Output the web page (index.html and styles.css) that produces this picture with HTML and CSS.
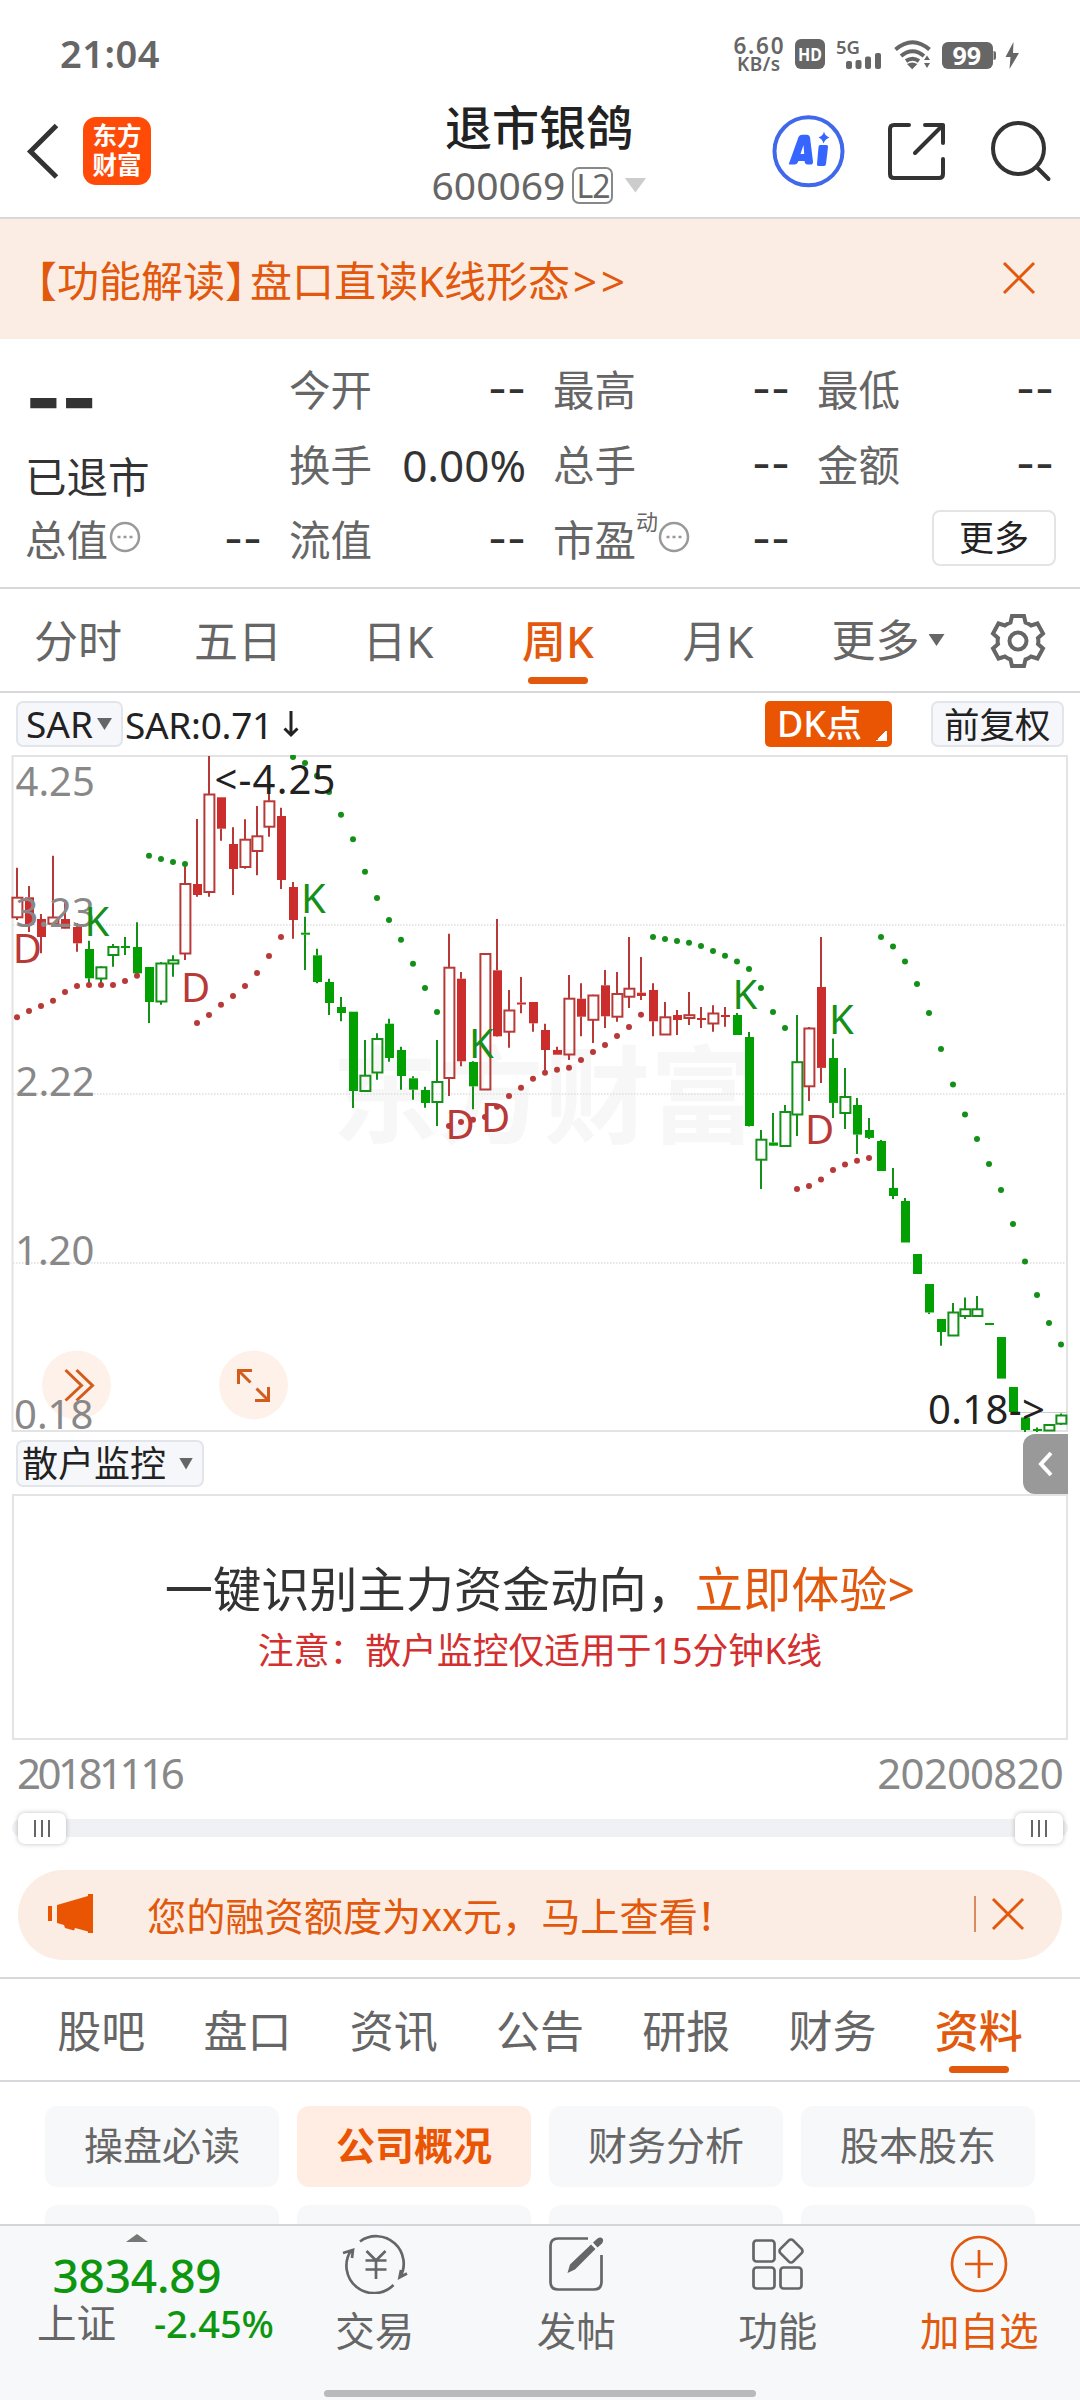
FILE: index.html
```html
<!DOCTYPE html>
<html lang="zh-CN">
<head>
<meta charset="utf-8">
<title>退市银鸽 600069</title>
<link rel="stylesheet" href="styles.css">
</head>
<body>
<div class="app">
  <div class="status">
    <span class="clock">21:04</span>
    <svg class="status-icons" viewBox="720 20 320 70" width="320" height="70">
      <g fill="#666" font-weight="600">
        <text x="733.5" y="53.5" font-size="22.5" textLength="50">6.60</text>
        <text x="737" y="71" font-size="19" textLength="43">KB/s</text>
        <rect x="795" y="39" width="30" height="30" rx="6"/>
        <text x="836" y="53.500" font-size="18.500" textLength="24" lengthAdjust="spacingAndGlyphs">5G</text>
        <rect x="846" y="61" width="6" height="8" rx="2"/><rect x="855.500" y="60" width="6" height="9" rx="2"/><rect x="865" y="56.500" width="6" height="12.500" rx="2"/><rect x="875" y="53" width="6" height="16" rx="2"/>
        <rect x="942" y="42" width="51" height="27" rx="6"/>
        <path d="M993.500 51q2.500 0 2.500 2v5q0 2-2.500 2zM1013.500 42l-8 15h5l-1 12 9.500-16h-6z"/>
        <path d="M907 64l5.200 5.200 5.200-5.200q-5.200-3-10.400 0zM924 60l3-4.500 3 4.500zM924 63l3 5 3-5z"/>
      </g>
      <path d="M895.500 49.500q17-14.500 34 0M901 56q11.500-9.500 23 0M906 61q6.500-4.500 13 0" fill="none" stroke="#666" stroke-width="4"/>
      <g fill="#fff" font-weight="700"><text x="798" y="61" font-size="18.500" textLength="24" lengthAdjust="spacingAndGlyphs">HD</text><text x="952.500" y="65" font-size="25">99</text></g>
    </svg>
  </div>

  <div class="header">
    <svg class="back" viewBox="0 0 40 60" width="40" height="60"><path d="M36.500 5.500L10.500 31.500 36.500 57" fill="none" stroke="#333" stroke-width="5"/></svg>
    <div class="logo"><span>东方</span><span>财富</span></div>
    <div class="title">
      <div class="name">退市银鸽</div>
      <div class="code">600069<span class="l2">L2</span><i class="tri tri-lg"></i></div>
    </div>
    <svg class="actions" viewBox="770 110 290 84" width="290" height="84">
      <circle cx="808.500" cy="151.300" r="34" fill="none" stroke="#3f68ea" stroke-width="4"/>
      <path d="M789 163.500L798.500 137q1-2.300 4-2.300h4.500q2.500 0 3 2.500l3 24.500q.2 2.800-2.500 2.800h-3q-2.500 0-3-3.500h-6q-1.500 3.500-4 3.500h-3.500q-3 0-2-1zM800.500 154h3.700l-.7-9zM820 145h6.500q1.700 0 1.500 2l-2 17q-.3 2-2 2h-5.500q-1.800 0-1.500-2l1.500-17q.3-2 1.500-2zM824 131.500q1 4.500 5.500 6-4.500 1.500-6 6-1-4.500-5-6 4.500-1.500 5.500-6z" fill="#3665ff"/>
      <g fill="none" stroke="#333" stroke-width="4" stroke-linecap="round" stroke-linejoin="round"><path d="M909 125h-15q-4 0-4 4v45q0 4 4 4h45q4 0 4-4v-15M925 125h18v18M943 125L915 153"/><circle cx="1018.500" cy="148.500" r="25.500"/><path d="M1036.500 167l12 12"/></g>
    </svg>
  </div>

  <div class="banner"><span><span class="tag">【功能解读】</span>盘口直读K线形态<span class="go">&gt;&gt;</span></span>
    <svg viewBox="0 0 34 34" width="34" height="34"><path d="M2 2l30 30M32 2L2 32"/></svg>
  </div>

  <div class="quote">
    <div class="price"><b>--</b><span>已退市</span></div>
    <div class="cell"><label>今开</label><em>--</em></div>
    <div class="cell"><label>最高</label><em>--</em></div>
    <div class="cell"><label>最低</label><em>--</em></div>
    <div class="cell"><label>换手</label><em class="num">0.00%</em></div>
    <div class="cell"><label>总手</label><em>--</em></div>
    <div class="cell"><label>金额</label><em>--</em></div>
    <div class="cell"><label>总值</label><svg class="info" viewBox="0 0 32 32" width="32" height="32"><circle cx="16" cy="16" r="14"/><path d="M8.500 16h3M14.500 16h3M20.500 16h3"/></svg><em>--</em></div>
    <div class="cell"><label>流值</label><em>--</em></div>
    <div class="cell"><label>市盈</label><sup>动</sup><svg class="info" viewBox="0 0 32 32" width="32" height="32"><circle cx="16" cy="16" r="14"/><path d="M8.500 16h3M14.500 16h3M20.500 16h3"/></svg><em>--</em></div>
    <div class="cell end"><button class="more">更多</button></div>
  </div>

  <div class="periods">
    <span>分时</span><span>五日</span><span>日K</span><span class="on">周K</span><span>月K</span>
    <span class="with-tri">更多<i class="tri tri-sm"></i></span>
    <svg viewBox="-30 -30 60 60" width="60" height="60"><path d="M-6-25H6L7.500-18.500Q10.500-17.500 13-15.500L19.500-17.500 25-7.500 20-3Q20.700 0 20 3L25 7.500 19.500 17.500 13 15.500Q10.500 17.500 7.500 18.500L6 25H-6L-7.500 18.500Q-10.500 17.500-13 15.500L-19.500 17.500-25 7.500-20 3Q-20.700 0-20-3L-25-7.500-19.500-17.500-13-15.500Q-10.500-17.500-7.500-18.500Z"/><circle r="8.500"/></svg>
  </div>

  <div class="indicator">
    <span class="box">SAR<i class="tri tri-md"></i></span><span class="sar">SAR:0.71</span><svg class="down" viewBox="0 0 16 28" width="16" height="28"><path d="M8 1v24M1.500 18.500L8 25l6.500-6.500"/></svg>
    <span class="dk">DK点</span><span class="box adj">前复权</span>
  </div>

  <svg id="chart" class="chart" viewBox="0 755 1080 678" width="1080" height="678">
    <text class="watermark" x="332" y="1135" textLength="424">东方财富</text>
    <path class="dotted" d="M13 925H1067M13 1094H1067M13 1263H1067"/>
    <path class="frame" d="M12.500 756H1067V1431H12.500Z"/>
    <path d="M1018 1412.500h49" stroke="#ccc"/>
    <g class="round"><circle cx="76.500" cy="1385" r="34.500"/><circle cx="253.500" cy="1385" r="34.500"/></g>
    <path class="glyph" d="M65.500 1370L81.500 1385.500 65.500 1400.500M76.500 1370L92.500 1385.500 76.500 1400.500M238.500 1384V1370.500H252M239.500 1371.500L250.500 1382.500M268.500 1387V1400.500H255M267.500 1399.500L256.500 1388.500"/>
    <g id="candles"></g>
    <g id="dots"></g>
    <g class="axis"><text x="15.500" y="795.500">4.25</text><text x="15.500" y="926.500">3.23</text><text x="15.500" y="1095.500">2.22</text><text x="15" y="1264.500">1.20</text><text x="14" y="1429">0.18</text></g>
    <g class="extreme"><text x="214.500" y="793.500" textLength="121">&lt;-4.25</text><text x="928" y="1423.500" textLength="117">0.18-&gt;</text></g>
    <g id="marks"></g>
  </svg>

  <div class="sub"><span class="box">散户监控<i class="tri tri-13"></i></span>
    <span class="handle"><svg viewBox="0 0 16 26" width="16" height="26"><path d="M13 2L3 13l10 11"/></svg></span>
  </div>

  <div class="promo">
    <p>一键识别主力资金动向，<a>立即体验&gt;</a></p>
    <small>注意：散户监控仅适用于15分钟K线</small>
  </div>

  <div class="dates"><span class="d1">20181116</span><span>20200820</span></div>
  <div class="slider"><span class="thumb"><i></i><i></i><i></i></span><span class="thumb"><i></i><i></i><i></i></span></div>

  <div class="pill">
    <svg class="horn" viewBox="46 1893 50 44" width="50" height="44"><path d="M48 1907h4v15h-4zM57 1906l31-9v-2h5v39h-5v-1.500l-13-3.500-1 2.500-9-2.500-1-3-7-2z"/></svg>
    <span>您的融资额度为xx元，马上查看<b>!</b></span>
    <i class="bar"></i>
    <svg class="x" viewBox="0 0 34 34" width="34" height="34"><path d="M2 2l30 30M32 2L2 32"/></svg>
  </div>

  <div class="sections"><span>股吧</span><span>盘口</span><span>资讯</span><span>公告</span><span>研报</span><span>财务</span><span class="on">资料</span></div>

  <div class="chips">
    <span>操盘必读</span><span class="on">公司概况</span><span>财务分析</span><span>股本股东</span>
    <span></span><span></span><span></span><span></span>
  </div>

  <div class="nav">
    <div class="index"><i class="up"></i><b>3834.89</b><div><span>上证</span><em>-2.45%</em></div></div>
    <div class="item"><svg viewBox="-35 -30 68 60" width="68" height="60"><path d="M-16-22.500A27.500 27.500 0 0 1 24 13.500M17.500 21A27.500 27.500 0 0 1-25-13.500M-33-11l10-3-1 8M31 9.500l-7.500 4 1.500-7.500"/><path d="M-9.500-13L0-3.500 9.500-13M-10.500-3.500h21M-10.500 5.500h21M0-3.500V15"/></svg><span>交易</span></div>
    <div class="item"><svg viewBox="-34 -30 68 60" width="68" height="60"><path d="M12-25.500H-18Q-25.500-25.500-25.500-18V18Q-25.500 25.500-18 25.500H18Q25.500 25.500 25.500 18V-9"/><path class="fill" d="M-8.500 9l2.500-8.500L15-19.500l4.500 4.500L-1 5.500zM17-21.500l4.500-4q3-2 5 0 1.500 2-.5 5l-4.500 4z"/></svg><span>发帖</span></div>
    <div class="item"><svg viewBox="-34 -30 68 60" width="68" height="60"><rect x="-24.500" y="-23.500" width="21" height="21" rx="3"/><rect x="-24.500" y="3.500" width="21" height="21" rx="3"/><rect x="2.500" y="3.500" width="21" height="21" rx="3"/><rect x="4" y="-22" width="18" height="18" rx="3" transform="rotate(45 13 -13)"/></svg><span>功能</span></div>
    <div class="item on"><svg viewBox="-34 -30 68 60" width="68" height="60"><circle r="27"/><path d="M-14 0h28M0-14v28"/></svg><span>加自选</span></div>
  </div>
  <div class="home"><i></i></div>
</div>
<script src="chart.js"></script>
</body>
</html>
```
FILE: styles.css
```css
* { box-sizing: border-box; }
body { margin: 0; background: #fff; }
body, button { font-family: "Noto Sans", "Noto Sans CJK SC", sans-serif; }
em, i { font-style: normal; }
.app { width: 1080px; height: 2400px; overflow: hidden; color: #666; display: flex; flex-direction: column; background: #fff; }
.app > * { flex: none; }

.status { height: 98px; padding: 20px 40px 0 60px; display: flex; justify-content: space-between; align-items: flex-start; }
.clock { font-size: 38px; font-weight: 600; line-height: 66px; letter-spacing: .5px; }

.header { height: 121px; border-bottom: 2px solid #d8d8dc; display: flex; align-items: flex-start; padding: 0 20px 0 20px; }
.back { margin-top: 22px; }
.logo { width: 68px; height: 68px; margin: 19px 0 0 23px; border-radius: 13px; background: #ff4a08; color: #fff; display: flex; flex-direction: column; align-items: center; padding-top: 4px; font-size: 24.500px; font-weight: 700; }
.logo span { line-height: 29px; }
.title { flex: 1; padding-left: 157px; text-align: center; }
.name { font-size: 47px; line-height: 58px; color: #222; font-weight: 500; }
.code { font-size: 39px; line-height: 58px; height: 58px; display: flex; align-items: center; justify-content: center; white-space: nowrap; }
.l2 { border: 2px solid #888; border-radius: 7px; width: 41px; height: 37px; line-height: 33px; font-size: 32px; margin-left: 7px; letter-spacing: -1px; }
.actions { margin-top: 12px; }

.tri { display: inline-block; background: #666; clip-path: polygon(0 0, 100% 0, 50% 100%); }
.tri-lg { width: 22px; height: 15px; background: #ccc; margin-left: 11px; }
.tri-sm { width: 16px; height: 12px; margin-left: 9px; }
.tri-md { width: 15px; height: 12px; margin-left: 4px; }
.tri-13 { width: 14px; height: 12px; margin-left: 13px; }

.banner { height: 120px; background: #fcede4; color: #e2590d; display: flex; align-items: center; justify-content: space-between; padding: 0 44px 2px 15px; font-size: 42px; }
.banner .tag { margin-right: -17px; }
.banner .go { letter-spacing: 4px; margin-left: 3px; }
.banner svg path, .x path { fill: none; stroke: #e2590d; stroke-width: 3; }

.quote { height: 250px; border-bottom: 2px solid #d8d8dc; padding: 14px 25px 0; display: grid; grid-template-columns: repeat(4, 237px); grid-template-rows: repeat(3, 75px); column-gap: 27px; font-size: 41.500px; }
.price { grid-row: 1 / 3; display: flex; flex-direction: column; color: #333; }
.price b { font-family: Inter, sans-serif; font-size: 78px; font-weight: 800; line-height: 90px; height: 100px; letter-spacing: -1px; }
.price span { line-height: 48px; }
.cell { display: flex; align-items: center; line-height: 75px; }
.cell em { margin-left: auto; color: #333; font-family: Inter, sans-serif; font-weight: 500; font-size: 41px; line-height: 73px; padding-bottom: 2px; }
.cell .num { font: 44px/75px "Noto Sans", sans-serif; padding: 0; }
.info { fill: none; stroke: #999; stroke-width: 2.500; margin: -7px 0 0 1px; }
sup { font-size: 22px; line-height: 22px; align-self: flex-start; margin-top: 7px; }
sup + .info { margin-left: 0; }
.cell.end { justify-content: flex-end; }
.more { width: 124px; height: 56px; border: 2px solid #e2e4e6; border-radius: 8px; background: #fff; color: #222; font-size: 35px; line-height: 50px; padding: 0; margin-right: -2px; margin-top: -5px; }

.periods { height: 104px; border-bottom: 2px solid #d8d8dc; display: flex; font-size: 44px; line-height: 105px; }
.periods span { width: 160px; text-align: center; position: relative; left: -2px; }
.periods .with-tri { padding-left: 20px; display: flex; align-items: center; justify-content: center; }
.periods svg { margin: 22px 0 0 28px; fill: none; stroke: #666; stroke-width: 4; }
.on { color: #e2590d; }
.periods .on { font-weight: 500; }
.periods .on, .sections .on { display: flex; flex-direction: column; align-items: center; }
.periods .on::after { content: ""; width: 60px; height: 7px; border-radius: 4px; background: #e2590d; margin-top: -17px; }

.indicator { height: 62px; display: flex; align-items: center; padding: 0 16px; color: #222; font-size: 37px; }
.box { height: 46px; border: 2px solid #e2e5e9; border-radius: 7px; background: #f6f7fa; color: #222; display: flex; align-items: center; }
.indicator .box:first-child { width: 107px; padding-left: 8px; }
.indicator .box { line-height: 42px; }
.sar { margin-left: 2px; letter-spacing: -.3px; }
.down { fill: none; stroke: #222; stroke-width: 3; margin-left: 10px; }
.dk { line-height: 45px; margin-left: auto; width: 127px; height: 46px; border-radius: 5px; background: linear-gradient(135deg, transparent 50%, #fff 50%) right 5px bottom 6px / 11px 11px no-repeat, #ea5504; color: #fff; padding-left: 12px; font-size: 36px; font-weight: 500; }
.indicator .adj { margin-left: 39px; width: 133px; padding-left: 11px; font-size: 35.500px; }

.chart { display: block; font-size: 40px; }
.watermark { font-size: 106px; font-weight: 700; fill: #f7f7f7; }
.dotted { stroke: #e0e0e0; stroke-width: 1.500; stroke-dasharray: 1.500 1.500; fill: none; }
.frame { fill: none; stroke: #e3e3e3; stroke-width: 2; }
.round { fill: #fef1ea; }
.glyph { fill: none; stroke: #d35c1c; stroke-width: 3; }
.axis { fill: #888; }
.extreme { fill: #222; }

.sub { height: 61px; padding-left: 16px; display: flex; justify-content: space-between; align-items: center; padding-right: 12px; }
.sub .box { width: 188px; height: 47px; padding-left: 4px; font-size: 36px; line-height: 42px; }
.handle { width: 45px; height: 60px; border-radius: 12px 0 0 12px; background: #999; display: flex; align-items: center; justify-content: center; }
.handle path { fill: none; stroke: #fff; stroke-width: 4; }

.promo { margin: 0 12px; height: 246px; border: 2px solid #e3e3e3; text-align: center; padding-top: 56px; }
.promo p { margin: 0; font-size: 48.200px; line-height: 72px; color: #333; }
.promo a { color: #e2590d; }
.promo small { display: block; font-size: 35.800px; line-height: 52px; color: #d42f2f; }

.dates { height: 71px; padding: 0 17px; display: flex; justify-content: space-between; font-size: 42px; line-height: 65px; color: #888; }
.dates span { letter-spacing: -.8px; }
.dates .d1 { letter-spacing: -3.500px; }
.slider { margin: 8px 12px 0; height: 18px; border-radius: 9px; background: #f0f1f4; display: flex; justify-content: space-between; align-items: center; padding: 0 5px 0 6px; }
.thumb { width: 48px; height: 31px; border-radius: 7px; background: #fff; box-shadow: 0 0 5px rgba(0,0,0,.25); display: flex; align-items: center; justify-content: center; gap: 5px; }
.thumb i { width: 2px; height: 17px; background: #666; }

.pill { margin: 33px 18px 17px; height: 90px; border-radius: 45px; background: #fcede4; color: #e2590d; display: flex; align-items: center; padding: 0 37px 2px 28px; font-size: 39.200px; }
.pill span { margin-left: 51px; }
.pill b { font-weight: 500; margin-left: 3px; }
.horn { fill: #ea5504; }
.bar { width: 2px; height: 36px; background: #d98a60; margin-left: auto; margin-right: 15px; }

.sections { height: 105px; border-top: 2px solid #d8d8dc; border-bottom: 2px solid #d8d8dc; padding: 0 28px; display: grid; grid-template-columns: repeat(7, 1fr); text-align: center; font-size: 44px; line-height: 104px; }
.sections .on { font-weight: 500; }
.sections .on::after { content: ""; width: 60px; height: 7px; border-radius: 4px; background: #e2590d; margin-top: -17px; }

.chips { height: 142px; overflow: hidden; padding: 24px 45px 0; display: grid; grid-template-columns: repeat(4, 234px); grid-template-rows: 81px 81px; gap: 18px; text-align: center; font-size: 39px; line-height: 78px; }
.chips span { border-radius: 12px; background: #f7f8fa; }
.chips .on { background: #ffede4; color: #ea5504; font-weight: 700; }

.nav { height: 148px; background: #f6f8fa; border-top: 2px solid #d5d6d9; display: flex; }
.index { width: 274px; display: flex; flex-direction: column; align-items: center; }
.up { width: 22px; height: 8px; background: #777; clip-path: polygon(50% 0, 100% 100%, 0 100%); margin-top: 8px; }
.index b { font-size: 46px; font-weight: 500; line-height: 60px; margin-top: 3px; color: #0f9610; letter-spacing: -.2px; }
.index div { align-self: stretch; display: flex; justify-content: space-between; margin-top: -4px; padding: 0 0 0 37px; line-height: 44px; font-size: 39.500px; }
.index em { color: #0f9610; font-size: 38px; font-weight: 500; line-height: 44px; }
.item { width: 201.500px; display: flex; flex-direction: column; align-items: center; }
.item svg { margin-top: 8px; fill: none; stroke: #666; stroke-width: 2.700; }
.item .fill { fill: #666; stroke: none; }
.item.on svg { stroke: #e2590d; }
.item span { font-size: 39.500px; line-height: 50px; margin-top: 12px; }
.home { flex: 1; background: #f6f8fa; padding-top: 18px; }
.home i { display: block; width: 432px; height: 7px; border-radius: 4px; background: #b9babc; margin: 0 auto; }
```
FILE: chart.js
```js
// One entry per week: kind (r/g colour, f filled / h hollow), high, body top, body bottom, low.
const candles = `rh 867.7 897.7 917.3 920|rf 886 897.3 924.7 932|rf 914 919 937 953.3|rh 855.7 917.5 923.7 925|rf 903 919 928.7 929
rf 923 927 943.3 951.7|gf 940.7 949 978.3 984|gh 966.3 967.3 978.5 983|gh 944 947 955 966.7|gf 937 946 948 955|gf 922.3 947 973.3 974
gf 967 967 1002 1023|gh 962 963.5 1001.5 1004.7|gh 955.3 960.3 963.5 976.7|rh 865 884 953.5 960|rf 819 884 895 896.7|rh 756 794.5 892 896.7
rf 797.3 797.3 828.7 840.7|rf 827.3 844 869 895|rh 819.3 839.7 867 868.7|rh 806 836.3 851 875.3|rh 765 801.3 826.7 836.7|rf 807.7 816 880 889
rf 882 887 920 938.7|gf 916.7 932.7 934.7 970|gf 948.7 955.3 982 983.3|gf 978.7 982 1003 1015|gf 997 1007 1013 1021.3|gf 1011.7 1011.7 1091 1108
gh 1040 1075.7 1091 1092|gh 1033.3 1039 1072.5 1079.7|gf 1018.7 1023.7 1058 1061.7|gf 1046.7 1050 1076 1089.7|gf 1076.3 1078.3 1089.7 1099.7
gf 1086.7 1090 1103 1107.7|gh 1040 1082 1102 1126|rh 933.7 967.7 1078 1096|rf 972 978.7 1061.3 1066.3|gf 1061.3 1062 1086.3 1109.3|rh 953 954 1089.5 1090
rf 919 970.3 1036.3 1036.7|rh 990 1010.5 1031.7 1047.7|rf 977 1002.5 1004.5 1013.3|rf 1002 1002 1023.3 1031.7|rf 1023.7 1030 1050 1073
rf 1046.7 1050 1054.7 1054.7|rh 975 998.7 1054.5 1060|rf 983.3 998.7 1016.7 1036.3|rh 994.7 995.5 1019.8 1043|rf 970 985.3 1016.3 1028
rh 972 994 1016.7 1021.7|rh 937 988.7 996.7 1008|rf 957 992.7 996 1000|rf 983.3 990 1021.3 1036.3|rh 1002 1017.3 1034.5 1035|rf 1010 1015 1020 1035
rh 992 1015.2 1018 1025|rf 1007 1018 1020 1028|rh 1005.3 1013.5 1023.5 1031.7|rf 1007 1015 1017 1026.8|gf 1013 1015 1035 1035|gf 1032 1037 1126 1126.4
gh 1130 1139.7 1159.7 1189|gf 1112.9 1142.5 1145.7 1146|gh 1105 1112 1146 1147|gh 1015 1062.2 1114.5 1136|rh 1027 1028.5 1086.3 1101|rf 937 987 1067.9 1082.9
gf 1038.6 1058 1102.9 1117.9|gh 1068 1097 1113 1129|gf 1098 1105 1134.6 1154|gf 1117.9 1130 1137.9 1139|gf 1140 1141 1171 1171|gf 1167.9 1187.9 1196 1199
gf 1197.9 1201 1242.5 1242.5|gf 1254 1254 1274 1274|gf 1284 1284 1312.5 1314|gf 1319 1319 1332 1345.7|gh 1302.9 1312.5 1335.5 1336|gh 1297.5 1309.3 1316 1319
gh 1296 1309.3 1316 1317|gf 1323 1323 1325 1325|gf 1337 1337 1378.6 1378.6|gf 1387 1387 1412 1412|gf 1417.5 1417.5 1430 1432|gf 1427.5 1429 1431 1432
gh 1424 1425 1430.5 1431|gh 1413.5 1415.5 1423.7 1425`.split(/[|\n]/);

// SAR runs: colour, index of the first week, then a y value per week.
const runs = [
  ["g", 11, [855.7, 859, 862, 864]],
  ["g", 23, [757, 763, 775.7, 792, 814.7, 839.3, 871.7, 898, 920, 939.7, 963.7, 988, 1012]],
  ["g", 53, [937, 939, 941, 942.7, 946, 951, 955.7, 961.4, 969, 988, 1012, 1028]],
  ["g", 72, [937, 946.4, 961.4, 984, 1013, 1049, 1084.6, 1114.6, 1139, 1164, 1190, 1224, 1261.4, 1295, 1323, 1344.6]],
  ["r", 0, [1017.3, 1011, 1006, 1000.7, 992, 986, 985, 985, 985, 981, 975.7]],
  ["r", 15, [1023, 1015, 1004.7, 996, 986, 973, 956, 937]],
  ["r", 36, [1126, 1122, 1119.7, 1117, 1106.7, 1096, 1087.7, 1078.7, 1072.7, 1069.7, 1067.7, 1060, 1052, 1045, 1036, 1027, 1014.7]],
  ["r", 65, [1189, 1186, 1179.6, 1170, 1164.6, 1160.7, 1158]]
];

const marks = [
  ["K", 84.5, 936], ["K", 301, 913], ["K", 469, 1058], ["K", 732.5, 1009], ["K", 829, 1034],
  ["D", 12.7, 962.7], ["D", 181, 1002], ["D", 445.5, 1138.7], ["D", 481, 1132], ["D", 805, 1144]
];

const stroke = { r: "#b83a38", g: "#149018" };
const fill = { r: "#cb2d2d", g: "#02a002" };
const weekX = i => 17 + 12 * i;

document.getElementById("candles").innerHTML = candles.map((row, i) => {
  const [kind, ...v] = row.trim().split(" ");
  const [high, top, bottom, low] = v.map(Number);
  const c = kind[0], x = weekX(i);
  const wick = `<path d="M${x} ${high}V${top}M${x} ${bottom}V${low}" stroke="${stroke[c]}" stroke-width="2"/>`;
  const body = kind[1] === "f"
    ? `<rect x="${x - 4}" y="${top}" width="9" height="${bottom - top}" fill="${fill[c]}"/>`
    : `<rect x="${x - 4.6}" y="${top}" width="10" height="${bottom - top}" fill="none" stroke="${stroke[c]}" stroke-width="2"/>`;
  return wick + body;
}).join("");

document.getElementById("dots").innerHTML = runs.map(([c, start, ys]) =>
  ys.map((y, k) => `<circle cx="${weekX(start + k)}" cy="${y}" r="3" fill="${stroke[c]}"/>`).join("")
).join("");

document.getElementById("marks").innerHTML = marks.map(([t, x, y]) =>
  `<text x="${x}" y="${y}" fill="${t === "K" ? stroke.g : stroke.r}">${t}</text>`
).join("");
```
